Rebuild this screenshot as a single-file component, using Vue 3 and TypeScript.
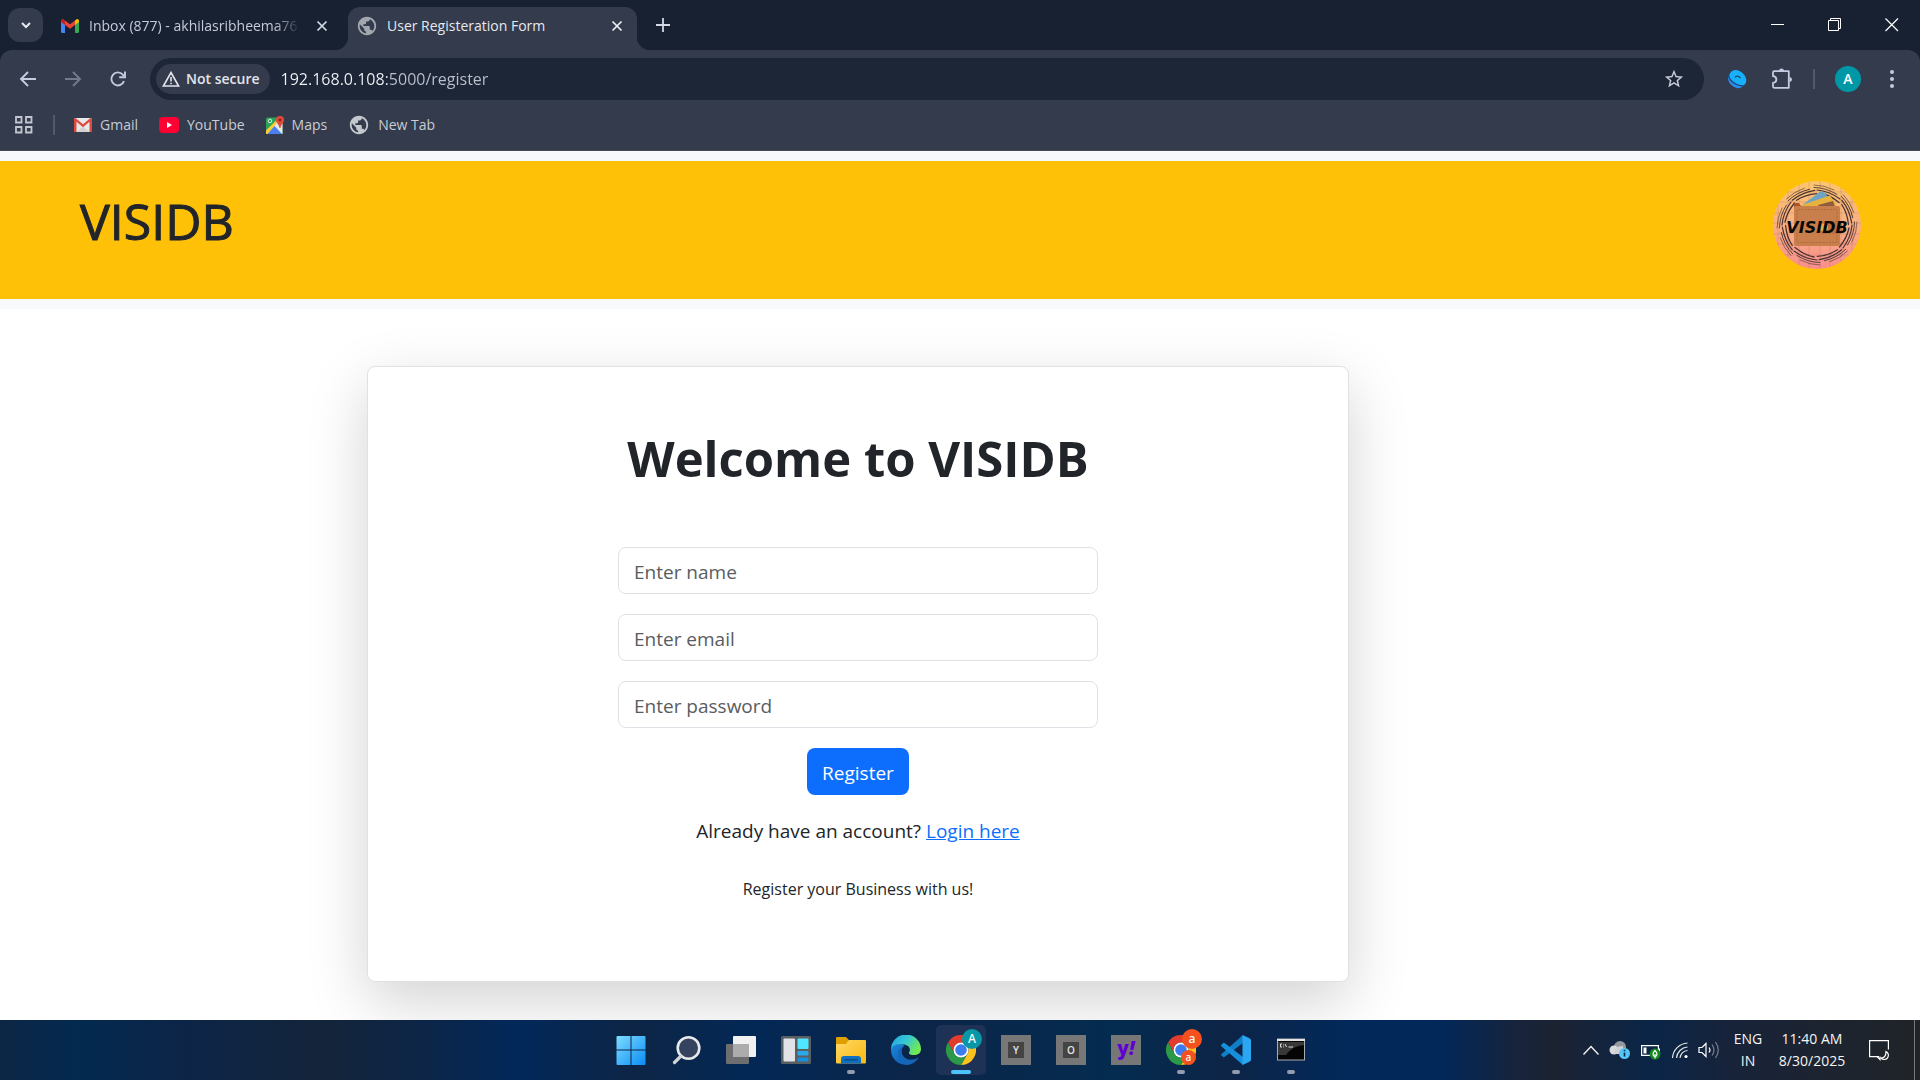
<script setup lang="ts">
import { ref } from 'vue'

interface Field {
  id: string
  type: string
  placeholder: string
}

const fields: Field[] = [
  { id: 'name', type: 'text', placeholder: 'Enter name' },
  { id: 'email', type: 'email', placeholder: 'Enter email' },
  { id: 'password', type: 'password', placeholder: 'Enter password' },
]

const address = ref('192.168.0.108:5000/register')

const globePath =
  'M12 2C6.48 2 2 6.48 2 12s4.48 10 10 10 10-4.48 10-10S17.52 2 12 2zm-1 17.93c-3.95-.49-7-3.85-7-7.93 0-.62.08-1.21.21-1.79L9 15v1c0 1.1.9 2 2 2v1.93zm6.9-2.54c-.26-.81-1-1.39-1.9-1.39h-1v-3c0-.55-.45-1-1-1H8v-2h2c.55 0 1-.45 1-1V7h2c1.1 0 2-.9 2-2v-.41c2.93 1.19 5 4.06 5 7.41 0 2.08-.8 3.97-2.1 5.39z'

const chromeSector = 'M15 7.5H28A15 15 0 0 0 2 7.5L8.5 18.75A7.5 7.5 0 0 1 15 7.5Z'

// Curved strokes that swirl round the wallet in the logo.
const swirls = Array.from({ length: 8 }, (_, i) => i * 45)
</script>

<template>
  <div class="desktop">
    <header class="browser">
      <div class="tabstrip">
        <button class="tab-search" aria-label="Search tabs">
          <svg width="12" height="12" viewBox="0 0 12 12"><path d="M2 4l4 4 4-4" fill="none" stroke="#e8eaf0" stroke-width="2" /></svg>
        </button>
        <div class="tab">
          <svg width="18" height="14" viewBox="0 0 18 14">
            <path d="M0 2v10.500Q0 14 1.500 14H4V5z" fill="#4285f4" />
            <path d="M14 5v9h2.500q1.500 0 1.500-1.500V2z" fill="#34a853" />
            <path d="M14 1.500V6l4-3V2q0-2-1.800-2-.8 0-2.200 1.500z" fill="#fbbc04" />
            <path d="M4 1.500V6L0 3V2Q0 0 1.800 0 2.600 0 4 1.500z" fill="#c5221f" />
            <path d="M4 1.500L9 5.200 14 1.500V6L9 9.700 4 6z" fill="#ea4335" />
          </svg>
          <span class="tab-title faded">Inbox (877) - akhilasribheema76</span>
          <button class="tab-close" aria-label="Close Inbox">
            <svg width="12" height="12" viewBox="0 0 12 12"><path d="M1.500 1.500l9 9M10.500 1.500l-9 9" stroke="#d5d9e6" stroke-width="1.700" /></svg>
          </button>
        </div>
        <div class="tab active">
          <svg width="22" height="22" viewBox="0 0 24 24"><path :d="globePath" fill="#a3a7b0" /></svg>
          <span class="tab-title">User Registeration Form</span>
          <button class="tab-close" aria-label="Close User Registeration Form">
            <svg width="12" height="12" viewBox="0 0 12 12"><path d="M1.500 1.500l9 9M10.500 1.500l-9 9" stroke="#eef0f6" stroke-width="1.700" /></svg>
          </button>
        </div>
        <button class="new-tab" aria-label="New tab">
          <svg width="14" height="14" viewBox="0 0 14 14"><path d="M7 0v14M0 7h14" stroke="#d5d9e6" stroke-width="1.800" /></svg>
        </button>
        <div class="window-buttons">
          <button aria-label="Minimize"><svg width="14" height="14" viewBox="0 0 14 14"><path d="M0 6.500h13" stroke="#fff" /></svg></button>
          <button aria-label="Restore">
            <svg width="14" height="14" viewBox="0 0 14 14"><path d="M.5 2.500h10v10H.5zM2.500 2.500v-2h10v10h-2" fill="none" stroke="#fff" /></svg>
          </button>
          <button aria-label="Close"><svg width="14" height="14" viewBox="0 0 14 14"><path d="M.5.5l12.500 12.500M13 .5L.5 13" stroke="#fff" stroke-width="1.200" /></svg></button>
        </div>
      </div>

      <div class="toolbar">
        <button class="nav" aria-label="Back">
          <svg width="18" height="18" viewBox="0 0 18 18"><path d="M17 9H2.500M9 2L2 9l7 7" fill="none" stroke="#c5cae0" stroke-width="1.900" /></svg>
        </button>
        <button class="nav" aria-label="Forward" disabled>
          <svg width="18" height="18" viewBox="0 0 18 18"><path d="M1 9h14.500M9 2l7 7-7 7" fill="none" stroke="#747a89" stroke-width="1.900" /></svg>
        </button>
        <button class="nav" aria-label="Reload">
          <svg width="18" height="18" viewBox="0 0 18 18">
            <path d="M15 11.200A6.500 6.500 0 1 1 13.800 4.600L15.500 6.500" fill="none" stroke="#c5cae0" stroke-width="1.900" />
            <path d="M16 1.500V7.300H10.200" fill="none" stroke="#c5cae0" stroke-width="1.900" />
          </svg>
        </button>
        <div class="omnibox">
          <button class="chip">
            <svg width="18" height="16" viewBox="0 0 18 16"><path d="M9 1.500L16.600 15H1.400z" fill="none" stroke="#e3e5ec" stroke-width="1.600" /><path d="M9 6v4.500M9 11.700v1.600" stroke="#e3e5ec" stroke-width="1.600" /></svg>
            Not secure
          </button>
          <input v-model="address" class="address" type="text" aria-label="Address" />
          <button class="star" aria-label="Bookmark this tab">
            <svg width="22" height="22" viewBox="0 0 24 24"><path d="M22 9.240l-7.190-.62L12 2 9.190 8.630 2 9.240l5.460 4.730L5.820 21 12 17.270 18.180 21l-1.630-7.030L22 9.240zM12 15.400l-3.760 2.270 1-4.280-3.320-2.880 4.380-.38L12 6.100l1.710 4.040 4.380.38-3.320 2.880 1 4.280L12 15.400z" fill="#c9ccd8" /></svg>
          </button>
        </div>
        <button class="nav ext" aria-label="Extension">
          <svg width="20" height="20" viewBox="0 0 20 20">
            <ellipse cx="9" cy="11.500" rx="9" ry="6.500" transform="rotate(42 9 11.500)" fill="#2b8cf0" />
            <ellipse cx="11" cy="9" rx="9.300" ry="6.800" transform="rotate(42 11 9)" fill="#17b0fb" />
            <path d="M1.500 5.500c0 5.500 7 11.500 15 11.500M8 8.500q2-3 5.500.5" fill="none" stroke="#1f4470" stroke-width="1.300" />
          </svg>
        </button>
        <button class="nav" aria-label="Extensions">
          <svg width="22" height="22" viewBox="0 0 22 22">
            <path d="M3.200 3.200H17.800V19.800H3.200Q2 19.800 2 18.600V14.800C6.500 14.500 6.500 8.500 2 8.200V4.400Q2 3.200 3.200 3.200Z" fill="none" stroke="#c5cae0" stroke-width="1.800" stroke-linejoin="round" />
            <path d="M8 3a2.500 2.500 0 0 1 5 0zM18.500 9a2.500 2.500 0 0 1 0 5z" fill="#c5cae0" />
          </svg>
        </button>
        <span class="divider"></span>
        <button class="avatar" aria-label="Profile">A</button>
        <button class="nav menu" aria-label="Menu">
          <svg width="4" height="18" viewBox="0 0 4 18"><g fill="#c5cae0"><circle cx="2" cy="2" r="2" /><circle cx="2" cy="9" r="2" /><circle cx="2" cy="16" r="2" /></g></svg>
        </button>
      </div>

      <nav class="bookmarks">
        <button class="apps" aria-label="Apps">
          <svg width="18" height="18" viewBox="0 0 18 18"><path d="M1 1h5.500v5.500H1zM11 1h5.500v5.500H11zM1 11h5.500v5.500H1zM11 11h5.500v5.500H11z" fill="none" stroke="#c3c6cf" stroke-width="1.800" /></svg>
        </button>
        <span class="divider"></span>
        <a href="#gmail">
          <svg width="18" height="14" viewBox="0 0 18 14">
            <rect width="18" height="14" rx="1.500" fill="#e9e9e9" />
            <path d="M2.500 14L9 8.500l6.500 5.500z" fill="#d2d2d2" />
            <path d="M0 14V1.500Q0 0 1.500 0L9 6.300 16.500 0Q18 0 18 1.500V14h-2.500V3.800L9 9.200 2.500 3.800V14H1z" fill="#dd4b3e" />
          </svg>
          Gmail
        </a>
        <a href="#youtube">
          <svg width="20" height="16" viewBox="0 0 20 16"><rect width="20" height="16" rx="4" fill="#ff0033" /><path d="M8 5l5 3-5 3z" fill="#fff" /></svg>
          YouTube
        </a>
        <a href="#maps">
          <svg width="18" height="18" viewBox="0 0 18 18">
            <rect y="1.500" width="16.500" height="16.500" rx="1.500" fill="#2ba45a" />
            <path d="M0 15L14 2l2.500 3v13H2z" fill="#e8e8e8" />
            <path d="M1 18l7.500-8 7.500 8z" fill="#4a80ee" />
            <path d="M0 14.500L13 1.500h2L1.500 18H0z" fill="#fbcc2f" />
            <circle cx="4" cy="5" r="1.800" fill="none" stroke="#d8eedf" />
            <path d="M14 0a4 4 0 0 1 4 4c0 3-3 4-3.500 8h-1C13 8 10 7 10 4a4 4 0 0 1 4-4z" fill="#e04a3c" />
            <circle cx="14" cy="4" r="1.400" fill="#8c1f1a" />
          </svg>
          Maps
        </a>
        <a href="#newtab">
          <svg width="22" height="22" viewBox="0 0 24 24" class="globe"><path :d="globePath" fill="#c4c7ce" /></svg>
          New Tab
        </a>
      </nav>
    </header>

    <main class="page">
      <div class="banner">
        <h1>VISIDB</h1>
        <svg class="logo" width="88" height="88" viewBox="0 0 88 88">
          <defs>
            <linearGradient id="logo-bg" x1="0" y1="0" x2="0" y2="1">
              <stop offset="0" stop-color="#fbc56f" />
              <stop offset=".5" stop-color="#f9b082" />
              <stop offset="1" stop-color="#f98e8c" />
            </linearGradient>
            <clipPath id="logo-clip"><circle cx="44" cy="44" r="44" /></clipPath>
          </defs>
          <circle cx="44" cy="44" r="44" fill="url(#logo-bg)" />
          <path clip-path="url(#logo-clip)" d="M5 0v88M15 0v88M26 0v88M36 0v88M47 0v88M57 0v88M68 0v88M79 0v88M0 11h88M0 21h88M0 32h88M0 42h88M0 53h88M0 63h88M0 74h88" stroke="#a86a55" stroke-opacity=".25" />
          <g fill="none" stroke="#4a3335" stroke-linecap="round">
            <g v-for="angle in swirls" :key="angle" :transform="`rotate(${angle} 44 44)`">
              <path d="M41 4Q51 4 61 9" stroke-width=".6" />
              <path d="M41 6.500Q53 6.500 64 13.500" stroke-width=".9" />
              <path d="M44 9Q56 10 67 18" stroke-width="1.200" />
              <path d="M47 12Q57 14 66 21.500" stroke-width="1.300" />
            </g>
          </g>
          <path d="M28 25L48 10l5 2 4 13z" fill="#6fa3c4" />
          <path d="M26 25L57 14.500l6 8V27H27z" fill="#e9b23f" />
          <path d="M45 24l15-4 2 6H46z" fill="#8f5c3e" />
          <path d="M21 22h5l2 3h34v3H21z" fill="#a9552e" />
          <rect x="21" y="25" width="46" height="40" rx="2" fill="#c97f4c" />
          <rect x="24" y="28.500" width="40" height="33" rx="1" fill="none" stroke="#a96639" stroke-width=".8" stroke-dasharray="2 1.200" />
          <rect x="47" y="40" width="22" height="13" rx="2" fill="#bd713f" />
          <circle cx="51" cy="46.500" r="4" fill="#e8ad4a" />
          <text x="44" y="52" text-anchor="middle" class="logo-text">VISIDB</text>
        </svg>
      </div>

      <div class="content">
        <section class="card">
          <h2>Welcome to VISIDB</h2>
          <form class="form" @submit.prevent>
            <input
              v-for="field in fields"
              :id="field.id"
              :key="field.id"
              :type="field.type"
              :placeholder="field.placeholder"
              :aria-label="field.placeholder"
            />
            <button type="submit">Register</button>
          </form>
          <p class="login">Already have an account? <a href="#login">Login here</a></p>
          <p class="note">Register your Business with us!</p>
        </section>
      </div>
    </main>

    <footer class="taskbar">
      <div class="launchers">
        <button class="app" aria-label="Start">
          <svg width="30" height="30" viewBox="0 0 30 30">
            <defs><linearGradient id="win" x1="0" y1="0" x2="1" y2="1"><stop offset="0" stop-color="#7fdcff" /><stop offset="1" stop-color="#0a8cf5" /></linearGradient></defs>
            <path d="M1.500 1H14.500V14.500H.5V2Q.5 1 1.500 1zM15.500 1H28.500Q29.500 1 29.500 2V14.500H15.500zM.5 15.500H14.500V30H1.500Q.5 30 .5 29zM15.500 15.500H29.500V29Q29.500 30 28.500 30H15.500z" fill="url(#win)" />
          </svg>
        </button>
        <button class="app" aria-label="Search">
          <svg width="30" height="30" viewBox="0 0 30 30"><circle cx="17.500" cy="13" r="10.800" fill="#34435f" stroke="#e9e9ec" stroke-width="2.600" /><path d="M10 21L3.500 27.500" stroke="#d5d5d8" stroke-width="3.200" stroke-linecap="round" /></svg>
        </button>
        <button class="app" aria-label="Task view">
          <svg width="30" height="30" viewBox="0 0 30 30">
            <rect x="7" y="1" width="23" height="21" rx="1" fill="#f1f1f1" />
            <rect y="9" width="23" height="20" rx="1" fill="#6e6e70" />
            <rect x="7" y="9" width="16" height="13" fill="#acacac" />
          </svg>
        </button>
        <button class="app" aria-label="Widgets">
          <svg width="30" height="30" viewBox="0 0 30 30">
            <rect y="1" width="30" height="28" rx="1.500" fill="#5a5f62" />
            <rect x="2.500" y="3.500" width="11.500" height="23" rx="1" fill="#e2e3e6" />
            <rect x="16.500" y="3.500" width="11" height="10.500" rx="1" fill="#50e6ff" />
            <rect x="16.500" y="16" width="11" height="4.500" rx="1" fill="#27a9ea" />
            <rect x="16.500" y="22.500" width="11" height="4" rx="1" fill="#1490df" />
          </svg>
        </button>
        <button class="app running" aria-label="File Explorer">
          <svg width="30" height="30" viewBox="0 0 30 30">
            <defs><linearGradient id="folder" x1="0" y1="0" x2="1" y2="1"><stop offset="0" stop-color="#ffd868" /><stop offset="1" stop-color="#f9b90c" /></linearGradient></defs>
            <path d="M0 3Q0 2 1 2H10L13 5H29V10H0z" fill="#e09f00" />
            <path d="M0 9H10L13 5H29Q30 5 30 6V27.500Q30 28.500 29 28.500H1Q0 28.500 0 27.500z" fill="url(#folder)" />
            <path d="M5 28.500V24Q5 21 8 21H22Q25 21 25 24V28.500z" fill="#0f6fc0" />
            <path d="M8.500 24.800H21.500" stroke="#0a4a85" stroke-width="1.400" />
          </svg>
        </button>
        <button class="app" aria-label="Edge">
          <svg width="30" height="30" viewBox="0 0 30 30">
            <defs>
              <linearGradient id="edge-top" x1="0" y1="0" x2="1" y2=".5"><stop offset="0" stop-color="#1fa4dd" /><stop offset=".5" stop-color="#35c4d8" /><stop offset="1" stop-color="#6fea52" /></linearGradient>
              <linearGradient id="edge-low" x1="0" y1="0" x2="1" y2="1"><stop offset="0" stop-color="#1b86dc" /><stop offset="1" stop-color="#0c4f9e" /></linearGradient>
            </defs>
            <path d="M0 15A15 15 0 0 1 30 14C30 18.500 26.500 20 23 20 19 20 17 19 18.500 16.500 20 13 17 9.500 12 9.500 6 9.500 1 13 0 15z" fill="url(#edge-top)" />
            <path d="M0 15C1 9 10 8 13.500 11 9 13 10 20 14 23 18 26 24 25 27.500 22.500 24 28 19.500 30 15 30A15 15 0 0 1 0 15z" fill="url(#edge-low)" />
            <path d="M13.500 11C9 13 9.500 20 14 23 18 26 24 25 27.500 22.500 23 31 12 32 8 25 5 19 8 12 13.500 11z" fill="#1566b8" />
          </svg>
        </button>
        <button class="app current" aria-label="Chrome, profile A">
          <svg width="30" height="30" viewBox="0 0 30 30">
            <path :d="chromeSector" fill="#e33b2e" />
            <path :d="chromeSector" fill="#fcc31e" transform="rotate(120 15 15)" />
            <path :d="chromeSector" fill="#2a9a48" transform="rotate(240 15 15)" />
            <circle cx="15" cy="15" r="7.500" fill="#fff" /><circle cx="15" cy="15" r="5.800" fill="#3b7df0" />
          </svg>
          <span class="badge teal">A</span>
        </button>
        <button class="app" aria-label="App Y"><span class="tile"><span class="glyph">Y</span></span></button>
        <button class="app" aria-label="App O"><span class="tile"><span class="glyph">O</span></span></button>
        <button class="app" aria-label="Yahoo"><span class="tile yahoo">y<i>!</i></span></button>
        <button class="app running" aria-label="Chrome, profile a">
          <svg width="30" height="30" viewBox="0 0 30 30">
            <path :d="chromeSector" fill="#e33b2e" />
            <path :d="chromeSector" fill="#fcc31e" transform="rotate(120 15 15)" />
            <path :d="chromeSector" fill="#2a9a48" transform="rotate(240 15 15)" />
            <circle cx="15" cy="15" r="7.500" fill="#fff" /><circle cx="15" cy="15" r="5.800" fill="#3b7df0" />
          </svg>
          <span class="badge orange">a</span>
          <span class="badge orange small">a</span>
        </button>
        <button class="app running" aria-label="Visual Studio Code">
          <svg width="30" height="30" viewBox="0 0 30 30">
            <path d="M22 0L0 19.500Q0 20 .3 20.300L2.200 22Q2.800 22.400 3.500 22L22 8z" fill="#0f7fc9" />
            <path d="M22 30L0 11Q-.3 10.500.3 10L2.200 8Q2.800 7.600 3.500 8L22 22z" fill="#1690dc" />
            <path d="M21.500 0L28.500 3.200Q30 4 30 5.500V24.500Q30 26 28.500 26.800L21.500 30z" fill="#2aa6f2" />
          </svg>
        </button>
        <button class="app running" aria-label="Command Prompt">
          <svg width="30" height="30" viewBox="0 0 30 30">
            <rect x="1.500" y="4" width="27" height="21" fill="#050505" stroke="#a9abae" />
            <path d="M2 7H28V10Q16 11 10 20H2z" fill="#383838" />
            <path d="M1 5H29" stroke="#e1e3e5" stroke-width="2" />
            <path d="M6 9H4.500V12H6M7.500 9.500v.8M7.500 11.500v.8M9 9l1.500 3M12.500 12H17" fill="none" stroke="#ddd" />
          </svg>
        </button>
      </div>

      <div class="tray">
        <button aria-label="Show hidden icons"><svg width="18" height="12" viewBox="0 0 18 12"><path d="M1.500 10.500L9 2.500l7.500 8" fill="none" stroke="#f2f2f2" stroke-width="1.400" /></svg></button>
        <button aria-label="OneDrive">
          <svg width="22" height="20" viewBox="0 0 22 20">
            <circle cx="11" cy="7" r="6" fill="#96989f" /><circle cx="5" cy="10" r="4.500" fill="#d9dadd" /><path d="M4 14h10V6L7 7z" fill="#d0d1d5" />
            <circle cx="15.500" cy="13.500" r="5.500" fill="#56c5f7" /><path d="M15.500 12.500v4M15.500 9.800v1.500" stroke="#07304f" stroke-width="1.600" />
          </svg>
        </button>
        <button aria-label="Battery">
          <svg width="22" height="20" viewBox="0 0 22 20">
            <path d="M1.600 5.600H18.400V15.400H1.600z" fill="none" stroke="#fff" stroke-width="1.200" /><path d="M18.500 8.500h1.500v4h-1.500z" fill="#fff" /><path d="M3.500 7.500h3v6h-3z" fill="#fff" />
            <circle cx="15" cy="14" r="5.500" fill="#0e8a1c" /><path d="M15 10.500q4 4 0 6.500-4-2.500 0-6.500zM15 14v4.500" fill="none" stroke="#fff" stroke-width="1.200" />
          </svg>
        </button>
        <button aria-label="Wi-Fi">
          <svg width="18" height="18" viewBox="0 0 18 18">
            <g fill="none" stroke="#e6e6e6" stroke-width="1.200"><path d="M1.500 17A16 16 0 0 1 16.500 2" /><path d="M5.500 17A12 12 0 0 1 16.500 6" /><path d="M9 17A8 8 0 0 1 16.500 9.500" /></g>
            <circle cx="15" cy="15.500" r="1.600" fill="#fff" />
          </svg>
        </button>
        <button aria-label="Volume">
          <svg width="22" height="18" viewBox="0 0 22 18">
            <path d="M1 6.500H4L8 2.500V15.500L4 11.500H1z" fill="none" stroke="#fff" stroke-width="1.200" />
            <path d="M11 6.500q2 2.500 0 5" fill="none" stroke="#fff" stroke-width="1.200" />
            <path d="M14 3.500q4 5.500 0 11M17.500 1q5.500 8 0 16" fill="none" stroke="#7c828c" stroke-width="1.200" />
          </svg>
        </button>
        <button class="two-line lang"><span>ENG</span><span>IN</span></button>
        <button class="two-line clock"><span>11:40 AM</span><span>8/30/2025</span></button>
        <button class="notify" aria-label="Notifications">
          <svg width="22" height="22" viewBox="0 0 22 22">
            <path d="M11 17.600H1.600V1.600H20.400V10.500" fill="none" stroke="#fff" stroke-width="1.200" />
            <path d="M9 17.500l3 3v-3" fill="none" stroke="#fff" stroke-width="1.200" />
            <path d="M18 12.500a4.200 4.200 0 1 1-5 6.500q5 0 5-6.500z" fill="#23262c" stroke="#fff" stroke-width="1.200" />
          </svg>
        </button>
        <button class="show-desktop" aria-label="Show desktop"></button>
      </div>
    </footer>
  </div>
</template>

<style>
body {
  margin: 0;
}
</style>

<style scoped>
* {
  box-sizing: border-box;
}

.desktop {
  display: flex;
  flex-direction: column;
  min-height: 100vh;
  font-family: 'Open Sans', 'Noto Sans', sans-serif;
  color: #212529;
}

svg {
  display: block;
  flex: none;
}

button {
  margin: 0;
  padding: 0;
  border: 0;
  background: none;
  font: inherit;
  color: inherit;
}

/* Browser chrome */
.browser {
  background: #182131;
  color: #d7dae4;
  font-size: 14px;
  line-height: 20px;
}

.tabstrip {
  display: flex;
  align-items: flex-end;
  height: 50px;
}

.tab-search {
  display: grid;
  place-items: center;
  width: 35px;
  height: 34px;
  margin: 0 0 8px 8px;
  border-radius: 12px;
  background: #333b4c;
}

.tab {
  display: flex;
  align-items: center;
  gap: 11px;
  width: 285px;
  height: 43px;
  margin-left: 6px;
  padding: 0 2px 6px 12px;
  color: #c5cad9;
}

.tab-title {
  flex: 1;
  overflow: hidden;
  white-space: nowrap;
}

.faded {
  mask-image: linear-gradient(90deg, #000 88%, transparent);
}

.tab:not(.active) {
  gap: 10px;
}

.tab-close {
  display: grid;
  place-items: center;
  width: 24px;
  height: 24px;
}

.tab:not(.active) .tab-close {
  justify-items: end;
  width: 18px;
  margin-right: 4px;
}

.active {
  position: relative;
  width: 289px;
  margin-left: 14px;
  padding-left: 8px;
  padding-right: 8px;
  gap: 9px;
  border-radius: 12px 12px 0 0;
  background: #333b4c;
  color: #e6e8ef;
}

.active::before,
.active::after {
  content: '';
  position: absolute;
  bottom: 0;
  width: 14px;
  height: 14px;
}

.active::before {
  right: 100%;
  background: radial-gradient(circle at 0 0, transparent 14px, #333b4c 15px);
}

.active::after {
  left: 100%;
  background: radial-gradient(circle at 100% 0, transparent 14px, #333b4c 15px);
}

.new-tab {
  display: grid;
  place-items: center;
  width: 34px;
  height: 34px;
  margin: 0 0 8px 9px;
}

.window-buttons {
  display: flex;
  align-self: flex-start;
  margin-left: auto;
}

.window-buttons button {
  display: grid;
  place-items: center;
  width: 57px;
  height: 49px;
}

.toolbar {
  display: flex;
  align-items: center;
  height: 58px;
  padding: 0 11px 0 5px;
  border-radius: 12px 12px 0 0;
  background: #333b4c;
}

.nav {
  display: grid;
  place-items: center;
  width: 45px;
  height: 42px;
}

.omnibox {
  display: flex;
  flex: 1;
  align-items: center;
  height: 42px;
  margin: 0 10px;
  padding: 0 19px 0 6px;
  border-radius: 21px;
  background: #1d2636;
}

.chip {
  display: flex;
  align-items: center;
  gap: 6px;
  height: 30px;
  padding: 0 10px 0 6px;
  border-radius: 15px;
  background: #333b4c;
  color: #e3e5ec;
  font-size: 14px;
  font-weight: 600;
}

.address {
  flex: 1;
  min-width: 0;
  padding: 0 0 0 11px;
  border: 0;
  outline: 0;
  background: linear-gradient(90deg, #f2f4f9 117px, #bcc1ce 117px);
  background-clip: text;
  color: transparent;
  font: 16px/24px 'Open Sans', 'Noto Sans', sans-serif;
}

.divider {
  width: 2px;
  height: 20px;
  background: #505a6e;
}

.avatar {
  width: 26px;
  height: 26px;
  margin: 0 14px 0 20px;
  border-radius: 50%;
  background: #0097a7;
  color: #fff;
  font-size: 14px;
  font-weight: 600;
}

.toolbar .divider {
  margin-left: 9px;
}

.menu {
  width: 34px;
}

.bookmarks {
  display: flex;
  align-items: center;
  height: 43px;
  padding: 0 15px 8px;
  border-bottom: 1px solid #4a4a55;
  background: #333b4c;
}

.bookmarks .divider {
  margin: 0 19px 0 20px;
}

.bookmarks a {
  display: flex;
  align-items: center;
  gap: 8px;
  margin-right: 21px;
  color: #c9ccd6;
  text-decoration: none;
}

/* Registration page */
.page {
  flex: 1;
  overflow: hidden;
  background: #fff;
}

.banner {
  display: flex;
  align-items: flex-start;
  justify-content: space-between;
  padding: 20px 59px 30px 80px;
  border: solid #f8f9fa;
  border-width: 10px 0;
  background: #ffc107;
}

.banner h1 {
  margin: 10px 0 0;
  font-size: 50px;
  line-height: 60px;
  font-weight: 500;
  -webkit-text-stroke: 1px currentColor;
}

.logo-text {
  font: italic bold 16px 'DejaVu Sans', sans-serif;
  fill: #080808;
}

.content {
  display: grid;
  grid-template-columns: 367fr 982fr 571fr;
  padding: 57px 0 38px;
}

.card {
  display: flex;
  flex-direction: column;
  grid-column: 2;
  align-items: center;
  padding: 61px 20px 79px;
  border: 1px solid #dee2e6;
  border-radius: 8px;
  background: #fff;
  box-shadow: 0 20px 60px rgba(0, 0, 0, 0.175);
  font-size: 19px;
  line-height: 30px;
}

.card h2 {
  margin: 0 0 59px;
  font-size: 49px;
  line-height: 60px;
  font-weight: 700;
}

.form {
  display: flex;
  flex-direction: column;
  align-items: center;
  gap: 20px;
  width: 100%;
  max-width: 480px;
}

.form input {
  width: 100%;
  height: 47px;
  padding: 2px 15px 0;
  border: 1px solid #dee2e6;
  border-radius: 8px;
  font: inherit;
}

.form input::placeholder {
  color: #595c5f;
  opacity: 1;
}

.form button {
  height: 47px;
  padding: 2px 15px 0;
  border-radius: 8px;
  background: #0d6efd;
  color: #fff;
}

.login {
  margin: 21px 0 30px;
}

.login a {
  color: #0d6efd;
}

.note {
  margin: 0;
  font-size: 16px;
  line-height: 26px;
}

/* Taskbar */
.taskbar {
  display: grid;
  grid-template-columns: 1fr auto 1fr;
  height: 60px;
  padding-left: 2px;
  background: linear-gradient(90deg, #0d2645, #032a50 4%, #0b2548 9%, #14243a 17%, #0c2547 22%, #02285a 27%, #0d2545 33%, #032856 39%, #0b2548 48%, #042c50 58%, #0d2446 64%, #02295a 70%, #02285a 75%, #17243c 79%, #1c2332 81%, #0a2548 86%, #17233a 90%, #1d2430 95%, #202428);
  color: #f5f5f5;
}

.launchers {
  display: flex;
  grid-column: 2;
  align-items: center;
  gap: 5px;
}

.app {
  position: relative;
  display: grid;
  place-items: center;
  width: 50px;
  height: 50px;
  border-radius: 5px;
}

.current {
  background: #1d3254;
}

.running::after,
.current::after {
  content: '';
  position: absolute;
  bottom: 1px;
  left: 21px;
  width: 8px;
  height: 4px;
  border-radius: 2px;
  background: #929cae;
}

.current::after {
  left: 15px;
  width: 20px;
  background: #4cc2ff;
}

.badge {
  position: absolute;
  top: 4px;
  right: 4px;
  width: 20px;
  height: 20px;
  border-radius: 50%;
  font-size: 12px;
  font-weight: 600;
  line-height: 20px;
  text-align: center;
}

.teal {
  background: #0797a7;
}

.orange {
  background: #f4511e;
}

.small {
  top: 25px;
  right: 10px;
  width: 15px;
  height: 15px;
  font-size: 10px;
  line-height: 15px;
}

.tile {
  display: grid;
  place-items: center;
  width: 30px;
  height: 30px;
  background: #777;
}

.glyph {
  width: 16px;
  height: 16px;
  background: #444;
  color: #e3e3e3;
  font-size: 10px;
  font-weight: 600;
  line-height: 16px;
  text-align: center;
}

.yahoo {
  display: block;
  color: #6001d2;
  font: 800 19px/26px 'Open Sans', sans-serif;
  text-align: center;
}

.tray {
  display: flex;
  align-items: center;
  justify-content: flex-end;
  font-size: 14px;
}

.tray svg {
  margin-right: 9px;
}

.two-line {
  display: flex;
  flex-direction: column;
  align-items: center;
  line-height: 22px;
}

.lang {
  width: 34px;
  margin-left: 2px;
}

.clock {
  width: 94px;
}

.notify {
  margin: 0 15px 0 9px;
}

.show-desktop {
  align-self: stretch;
  width: 6px;
  border-left: 1px solid #75787c;
}
</style>
